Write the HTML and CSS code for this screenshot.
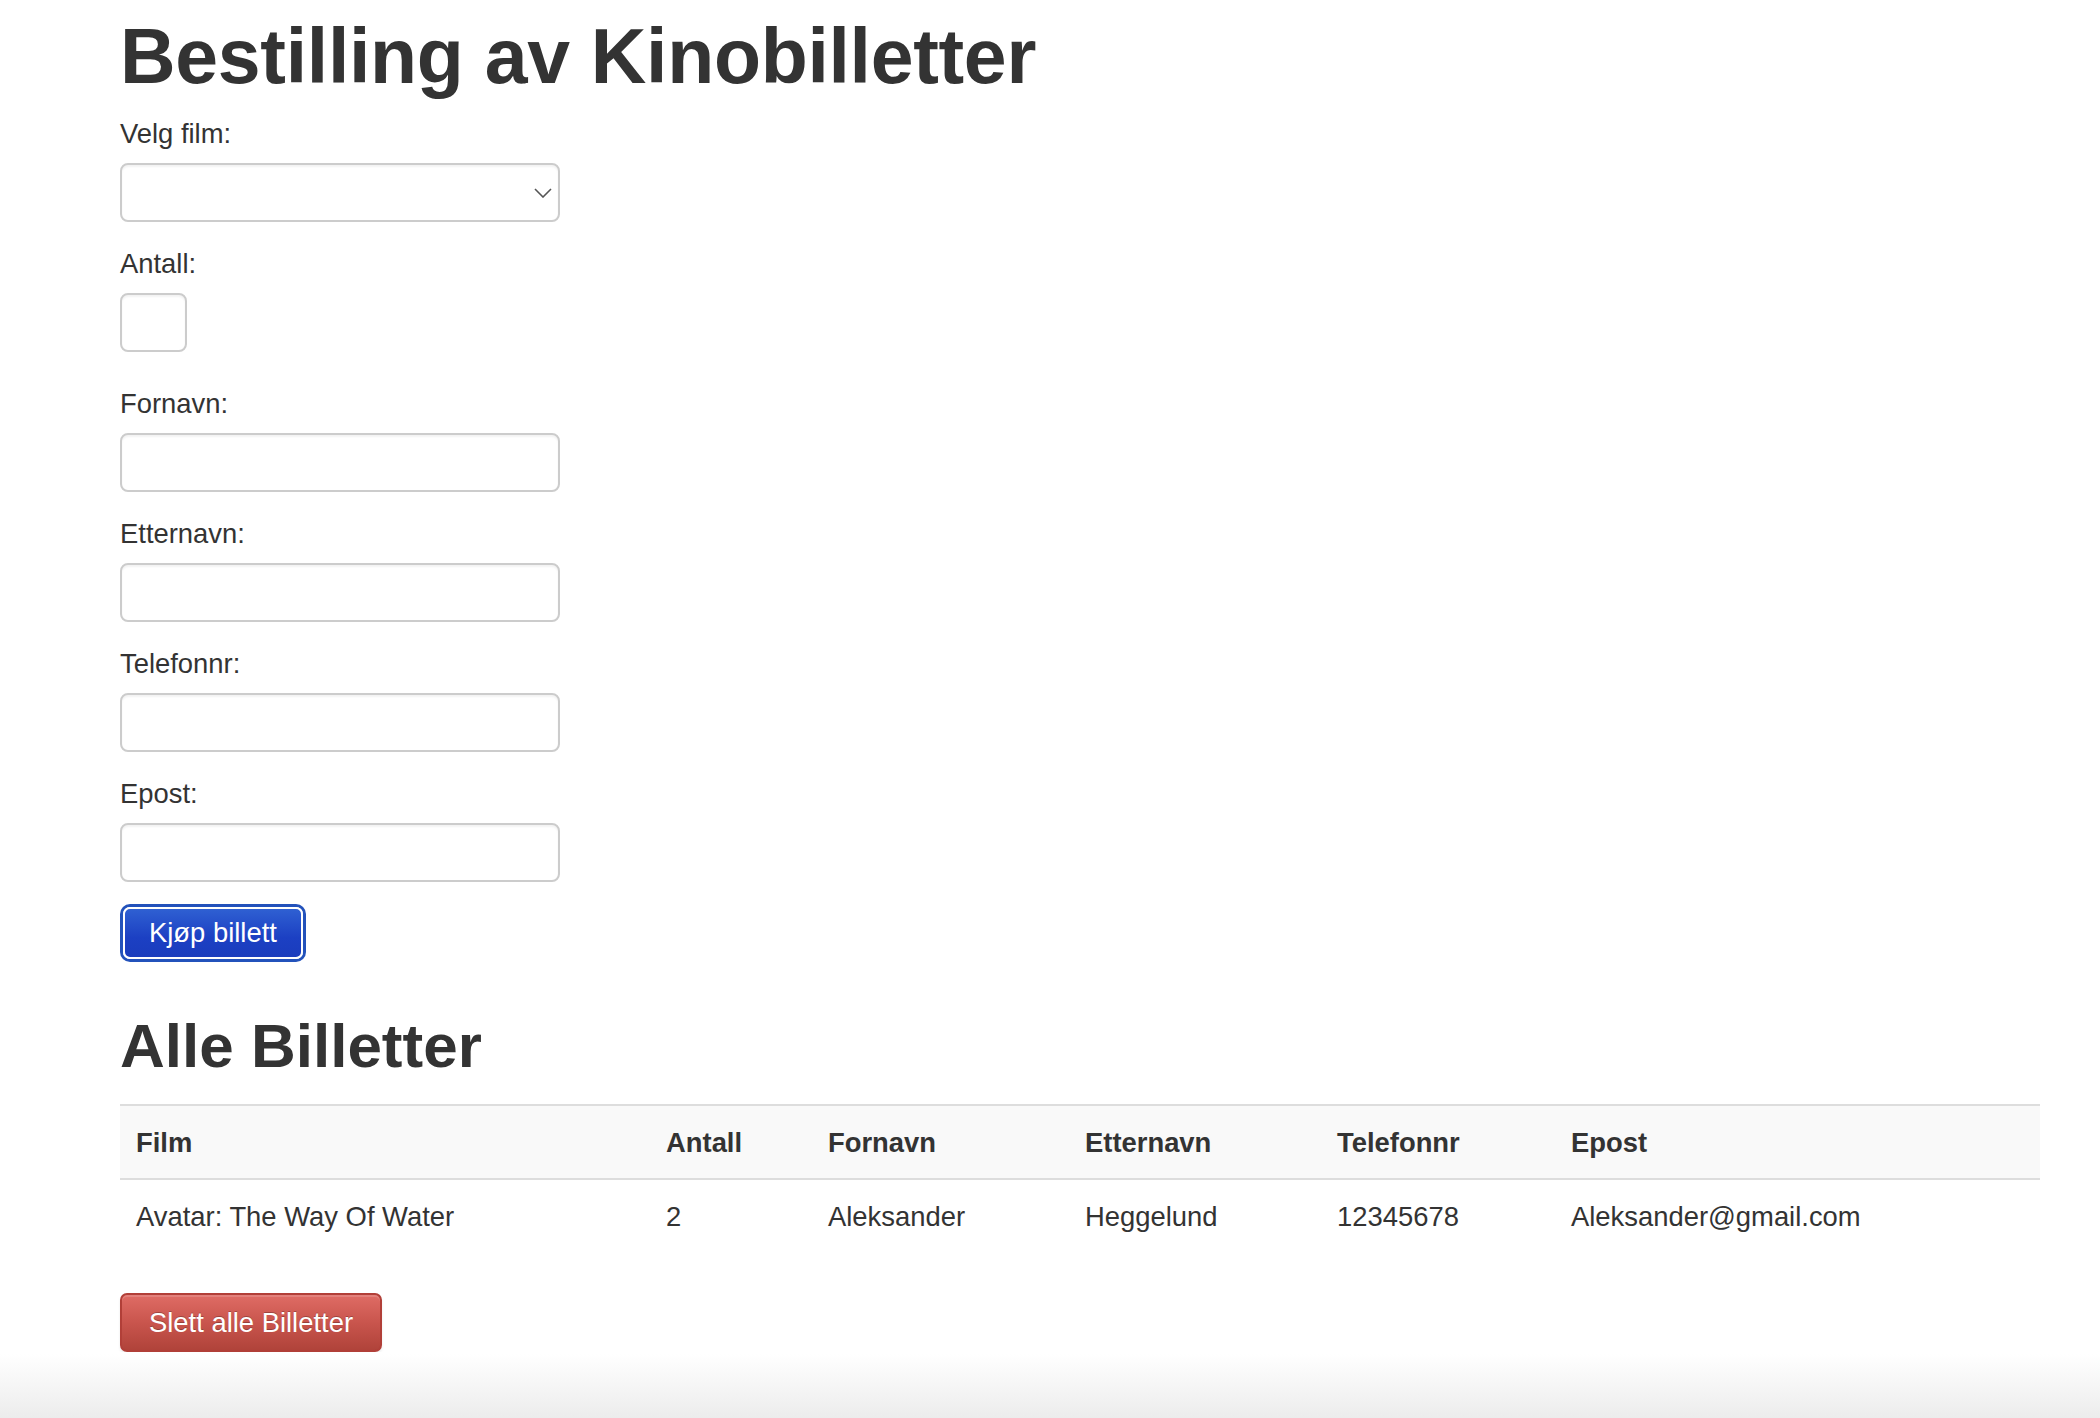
FILE: index.html
```html
<!DOCTYPE html>
<html lang="no">
<head>
<meta charset="utf-8">
<title>Bestilling av Kinobilletter</title>
<link rel="stylesheet" href="styles.css">
</head>
<body>
<div class="container">
  <h1 class="title">Bestilling av Kinobilletter</h1>
  <form class="order-form">
    <div class="form-group">
      <label class="field-label" for="film">Velg film:</label>
      <div class="select-wrap">
        <select id="film" class="form-control select-control"><option></option></select>
        <svg class="select-arrow" width="18" height="10" viewBox="0 0 18 10"><path d="M1 1 L9 9 L17 1" fill="none" stroke="#555" stroke-width="1.6"/></svg>
      </div>
    </div>
    <div class="form-group form-group-num">
      <label class="field-label" for="antall">Antall:</label>
      <input id="antall" class="form-control num-control" type="text">
    </div>
    <div class="form-group">
      <label class="field-label" for="fornavn">Fornavn:</label>
      <input id="fornavn" class="form-control" type="text">
    </div>
    <div class="form-group">
      <label class="field-label" for="etternavn">Etternavn:</label>
      <input id="etternavn" class="form-control" type="text">
    </div>
    <div class="form-group">
      <label class="field-label" for="telefonnr">Telefonnr:</label>
      <input id="telefonnr" class="form-control" type="text">
    </div>
    <div class="form-group">
      <label class="field-label" for="epost">Epost:</label>
      <input id="epost" class="form-control" type="text">
    </div>
    <button type="button" class="btn btn-primary">Kjøp billett</button>
  </form>

  <h2 class="subtitle">Alle Billetter</h2>
  <table class="tickets">
    <colgroup>
      <col class="c-film"><col class="c-antall"><col class="c-fornavn"><col class="c-etternavn"><col class="c-tlf"><col class="c-epost">
    </colgroup>
    <thead>
      <tr><th>Film</th><th>Antall</th><th>Fornavn</th><th>Etternavn</th><th>Telefonnr</th><th>Epost</th></tr>
    </thead>
    <tbody>
      <tr><td>Avatar: The Way Of Water</td><td>2</td><td>Aleksander</td><td>Heggelund</td><td>12345678</td><td>Aleksander@gmail.com</td></tr>
    </tbody>
  </table>
  <button type="button" class="btn btn-danger">Slett alle Billetter</button>
</div>
</body>
</html>
```
FILE: styles.css
```css
html {
  height: 100%;
  background: linear-gradient(to bottom, #ffffff 0, #ffffff calc(100% - 64px), #ececec 100%);
}
body {
  margin: 0;
  font-family: "Liberation Sans", Arial, Helvetica, sans-serif;
  font-size: 27.4px;
  line-height: 39px;
  color: #333;
}
.container {
  padding: 0 60px 0 120px;
}
.title {
  font-size: 77px;
  line-height: 1.1;
  font-weight: 700;
  margin: 14px 0 15.5px;
  letter-spacing: -0.3px;
}
.order-form {
  display: flex;
  flex-direction: column;
  align-items: flex-start;
}
.form-group {
  display: flex;
  flex-direction: column;
  align-items: flex-start;
  margin-bottom: 22px;
}
.form-group-num {
  margin-bottom: 32px;
}
.field-label {
  display: block;
  font-weight: 400;
  margin-bottom: 10px;
}
.form-control {
  box-sizing: border-box;
  width: 440px;
  height: 59px;
  border: 2px solid #cccccc;
  border-radius: 8px;
  background: #fff;
  box-shadow: inset 0 2px 2px rgba(0, 0, 0, 0.05);
  font: inherit;
  padding: 0 20px;
  margin: 0;
}
.select-wrap {
  position: relative;
}
.select-control {
  appearance: none;
  -webkit-appearance: none;
  display: block;
}
.select-arrow {
  position: absolute;
  right: 8px;
  top: 25px;
}
.num-control {
  width: 67px;
}
.btn {
  font: inherit;
  line-height: 1;
  color: #fff;
  cursor: pointer;
  box-sizing: border-box;
}
.btn-primary {
  margin-top: 3px;
  margin-left: 3px;
  height: 52px;
  padding: 0 24px;
  border: 2px solid #fff;
  border-radius: 7px;
  background: linear-gradient(to bottom, #2f60d2 0, #1c40c3 60%, #1a3cbd 100%);
  box-shadow: 0 0 0 3px #2352bb;
}
.subtitle {
  font-size: 62px;
  line-height: 1.1;
  font-weight: 700;
  margin: 52.5px 0 24px;
}
.tickets {
  width: 100%;
  border-collapse: collapse;
  table-layout: fixed;
}
.c-film { width: 530px; }
.c-antall { width: 162px; }
.c-fornavn { width: 257px; }
.c-etternavn { width: 252px; }
.c-tlf { width: 234px; }
.c-epost { width: auto; }
.tickets th,
.tickets td {
  text-align: left;
  padding: 17px 16px 16px;
  line-height: 39px;
}
.tickets thead tr {
  background: #f9f9f9;
  border-top: 2px solid #dddddd;
  border-bottom: 2px solid #dddddd;
}
.tickets th {
  font-weight: 700;
}
.btn-danger {
  margin-top: 41px;
  height: 59px;
  padding: 0 27px;
  border: 2px solid #b13f38;
  border-radius: 7px;
  background: linear-gradient(to bottom, #df6c65 0, #c9554d 50%, #b0433a 100%);
  text-shadow: 0 -1px 0 rgba(0, 0, 0, 0.25);
  box-shadow: inset 0 2px 0 rgba(255, 255, 255, 0.15), 0 2px 3px rgba(0, 0, 0, 0.08);
}
```
